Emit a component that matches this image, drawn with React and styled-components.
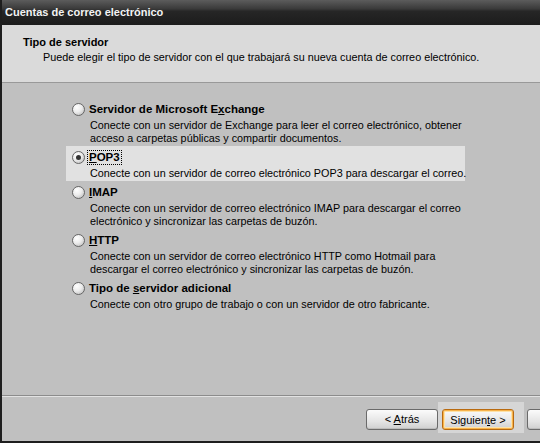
import styled, { createGlobalStyle } from "styled-components";

const GlobalStyle = createGlobalStyle`
  html, body {
    margin: 0;
    padding: 0;
    background: #1e1e1e;
  }
  body {
    font-family: "Liberation Sans", Arial, sans-serif;
    font-size: 10.8px;
    color: #000;
  }
`;

const options = [
  {
    id: "exchange",
    label: ["Servidor de Microsoft E", "x", "change"],
    desc: [
      "Conecte con un servidor de Exchange para leer el correo electrónico, obtener",
      "acceso a carpetas públicas y compartir documentos.",
    ],
  },
  {
    id: "pop3",
    label: ["", "P", "OP3"],
    desc: ["Conecte con un servidor de correo electrónico POP3 para descargar el correo."],
  },
  {
    id: "imap",
    label: ["", "I", "MAP"],
    desc: [
      "Conecte con un servidor de correo electrónico IMAP para descargar el correo",
      "electrónico y sincronizar las carpetas de buzón.",
    ],
  },
  {
    id: "http",
    label: ["", "H", "TTP"],
    desc: [
      "Conecte con un servidor de correo electrónico HTTP como Hotmail para",
      "descargar el correo electrónico y sincronizar las carpetas de buzón.",
    ],
  },
  {
    id: "other",
    label: ["Tipo de ", "s", "ervidor adicional"],
    desc: ["Conecte con otro grupo de trabajo o con un servidor de otro fabricante."],
  },
];

export default function App() {
  const selected = "pop3";

  return (
    <>
      <GlobalStyle />
      <Window>
        <TitleBar>Cuentas de correo electrónico</TitleBar>
        <Header>
          <HeaderTitle>Tipo de servidor</HeaderTitle>
          <HeaderText>
            Puede elegir el tipo de servidor con el que trabajará su nueva cuenta de correo electrónico.
          </HeaderText>
        </Header>
        <Body>
          {options.map((opt) => (
            <Option key={opt.id} $active={opt.id === selected}>
              <OptionLabel>
                <Radio $checked={opt.id === selected} />
                <LabelText $focus={opt.id === selected}>
                  {opt.label[0]}
                  <u>{opt.label[1]}</u>
                  {opt.label[2]}
                </LabelText>
              </OptionLabel>
              <OptionDesc>
                {opt.desc.map((line, i) => (
                  <div key={i}>{line}</div>
                ))}
              </OptionDesc>
            </Option>
          ))}
        </Body>
        <Footer>
          <Button>
            &lt; <u>A</u>trás
          </Button>
          <FocusArea>
            <Button $default>
              Siguien<u>t</u>e &gt;
            </Button>
          </FocusArea>
          <Button />
        </Footer>
      </Window>
    </>
  );
}

const Window = styled.div`
  width: 540px;
  height: 443px;
  box-sizing: border-box;
  display: flex;
  flex-direction: column;
  border-left: 2px solid #1e1e1e;
  border-bottom: 2px solid #1e1e1e;
  background: #c0c0c0;
  overflow: hidden;
`;

const TitleBar = styled.div`
  height: 25px;
  margin-left: -2px;
  padding: 0 0 1px 5px;
  box-sizing: border-box;
  display: flex;
  align-items: center;
  background: linear-gradient(#5c5c5c 0%, #3a3a3a 35%, #262626 45%, #1c1c1c 100%);
  color: #f2f2f2;
  font-size: 11px;
  font-weight: bold;
`;

const Header = styled.div`
  height: 58px;
  box-sizing: border-box;
  padding: 10px 0 0 21px;
  background: #dadada;
  border-bottom: 1px solid #999;
`;

const HeaderTitle = styled.div`
  font-weight: bold;
  font-size: 11px;
  line-height: 14px;
`;

const HeaderText = styled.div`
  padding-left: 20px;
  line-height: 14px;
  margin-top: 1px;
`;

const Body = styled.div`
  flex: 1;
  display: flex;
  flex-direction: column;
  align-items: flex-start;
  padding: 15px 0 0 64px;
`;

const Option = styled.div`
  width: 399px;
  box-sizing: border-box;
  padding: 3px 0 1px 6px;
  background: ${(p) => (p.$active ? "#e1e1e1" : "transparent")};
`;

const OptionLabel = styled.div`
  height: 16px;
  display: flex;
  align-items: center;
  gap: 3px;
`;

const Radio = styled.span`
  width: 13px;
  height: 13px;
  box-sizing: border-box;
  border-radius: 50%;
  border: 1px solid #666;
  background: radial-gradient(circle at 35% 30%, #ffffff 0%, #ececec 45%, #b4b4b4 100%);
  display: flex;
  align-items: center;
  justify-content: center;
  &::after {
    content: "";
    width: 5px;
    height: 5px;
    border-radius: 50%;
    background: ${(p) => (p.$checked ? "#333" : "transparent")};
  }
`;

const LabelText = styled.span`
  font-weight: bold;
  font-size: 11.5px;
  line-height: 13px;
  padding: 0 1px;
  outline: ${(p) => (p.$focus ? "1px dotted #000" : "none")};
`;

const OptionDesc = styled.div`
  margin-top: 2px;
  padding-left: 18px;
  line-height: 13px;
  white-space: nowrap;
`;

const Footer = styled.div`
  height: 46px;
  box-sizing: border-box;
  border-top: 1px solid #8c8c8c;
  box-shadow: inset 0 1px 0 #e2e2e2;
  display: flex;
  align-items: center;
  padding: 0 0 0 364px;
  gap: 0;
`;

const FocusArea = styled.div`
  padding: 6px 10px 3px 4px;
  margin: -2px 3px 0 0;
  background: #d6d6d6;
`;

const Button = styled.button`
  width: 72px;
  height: 21px;
  flex-shrink: 0;
  box-sizing: border-box;
  font-family: "Liberation Sans", Arial, sans-serif;
  font-size: 11px;
  color: #000;
  border-radius: 3px;
  border: 1px solid ${(p) => (p.$default ? "#b86a10" : "#6a6a6a")};
  background: linear-gradient(#fbfbfb, #e4e4e4 60%, #cfcfcf);
  box-shadow: ${(p) =>
    p.$default ? "inset 0 0 0 1px #f7b24a, inset 0 0 0 2px #fde2a8" : "inset 0 -1px 0 #bcbcbc"};
  padding: 0;
  margin-top: 1px;
`;
